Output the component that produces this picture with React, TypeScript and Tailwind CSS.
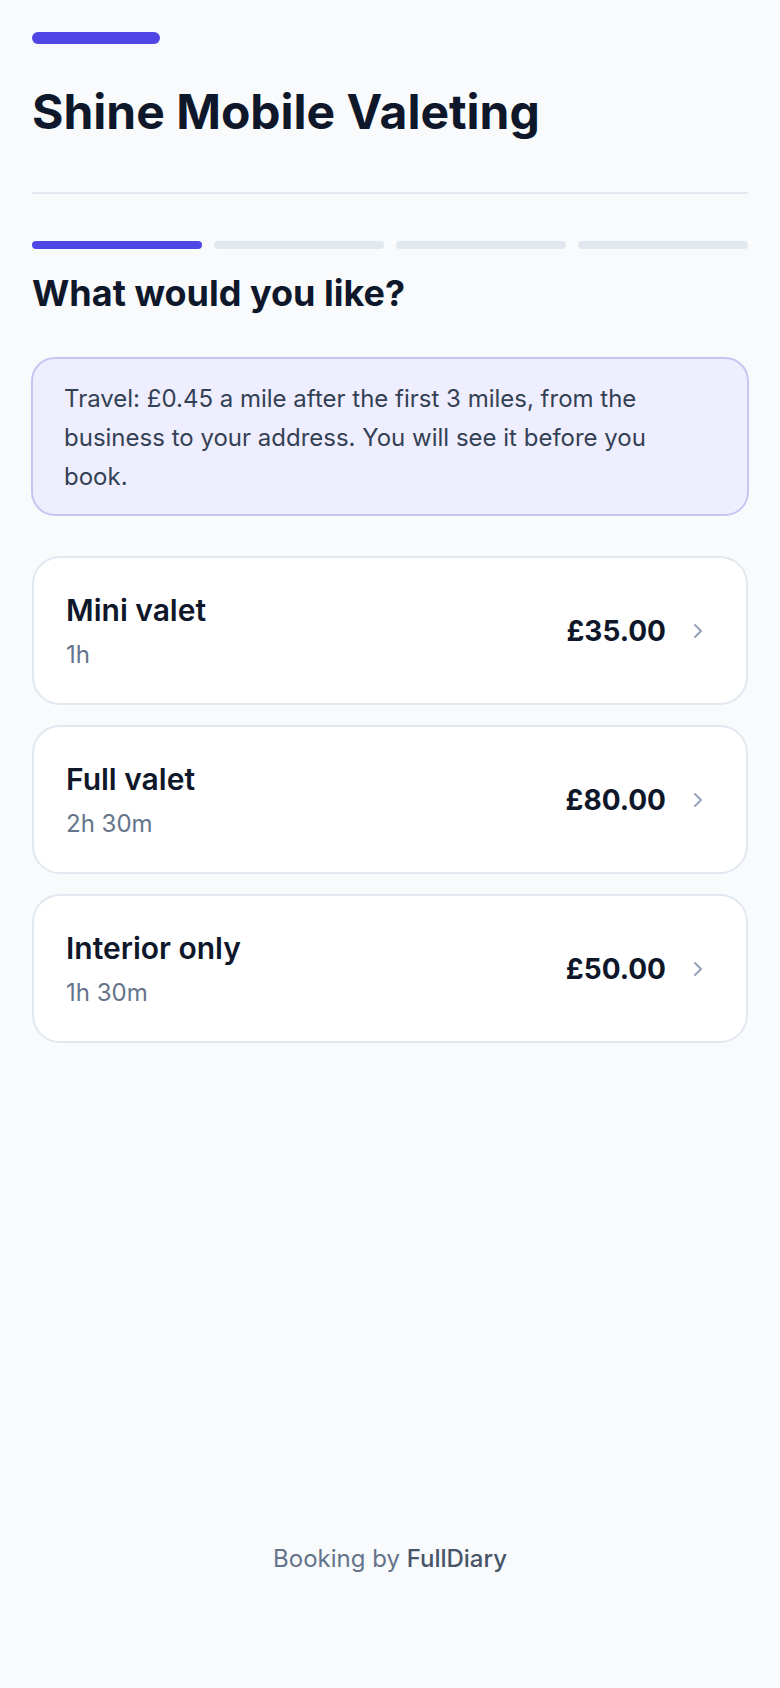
import { ChevronRight } from "lucide-react"

interface Service {
  id: string
  name: string
  duration: string
  price: number
}

const services: Service[] = [
  { id: "mini", name: "Mini valet", duration: "1h", price: 35 },
  { id: "full", name: "Full valet", duration: "2h 30m", price: 80 },
  { id: "interior", name: "Interior only", duration: "1h 30m", price: 50 },
]

const priceFormatter = new Intl.NumberFormat("en-GB", {
  style: "currency",
  currency: "GBP",
  minimumFractionDigits: 2,
})

const STEPS = 4
const currentStep = 0

export default function App() {
  return (
    <div
      className="flex min-h-screen flex-col bg-[#f8fafc] px-8 pt-8 text-slate-900"
      style={{ fontFamily: "Inter, 'Noto Sans', sans-serif" }}
    >
      <div className="h-3 w-32 rounded-full bg-[#4f46e5]" />

      <h1 className="mt-11 text-[48px] leading-[48px] font-bold text-[#0f172a]">
        Shine Mobile Valeting
      </h1>

      <div className="mt-14 h-0.5 w-full bg-[#e2e8f0]" />

      <div className="mt-[47px] grid grid-cols-4 gap-3">
        {Array.from({ length: STEPS }).map((_, index) => (
          <div
            key={index}
            className={`h-2 rounded-full ${index <= currentStep ? "bg-[#4f46e5]" : "bg-[#e2e8f0]"}`}
          />
        ))}
      </div>

      <h2 className="mt-6 text-[36px] leading-10 font-bold text-[#0f172a]">
        What would you like?
      </h2>

      <div className="-mx-px mt-11 rounded-3xl border-2 border-[#c9c5f3] bg-[#efeefe] pt-5 pb-[18px] pl-[31px] pr-14">
        <p className="text-[24px] leading-[39px] text-[#334155]">
          Travel: £0.45 a mile after the first 3 miles, from the business to your address. You will
          see it before you book.
        </p>
      </div>

      <div className="mt-10 flex flex-col gap-5">
        {services.map((service) => (
          <button
            key={service.id}
            type="button"
            className="flex items-center justify-between rounded-[28px] border-2 border-[#e2e8f0] bg-white pt-[34px] pb-[33px] pl-8 pr-9 text-left"
          >
            <div>
              <p className="text-[30px] leading-9 font-semibold text-[#0f172a]">{service.name}</p>
              <p className="mt-3 text-[24px] leading-[30px] text-[#64748b]">{service.duration}</p>
            </div>
            <div className="flex items-center gap-5">
              <span className="text-[28px] leading-9 font-bold text-[#0f172a]">
                {priceFormatter.format(service.price)}
              </span>
              <ChevronRight className="h-6 w-6 text-[#94a3b8]" strokeWidth={2} />
            </div>
          </button>
        ))}
      </div>

      <footer className="mt-auto pb-[113px] text-center text-[24px] leading-8 text-[#64748b]">
        Booking by <span className="font-medium text-[#475569]">FullDiary</span>
      </footer>
    </div>
  )
}
